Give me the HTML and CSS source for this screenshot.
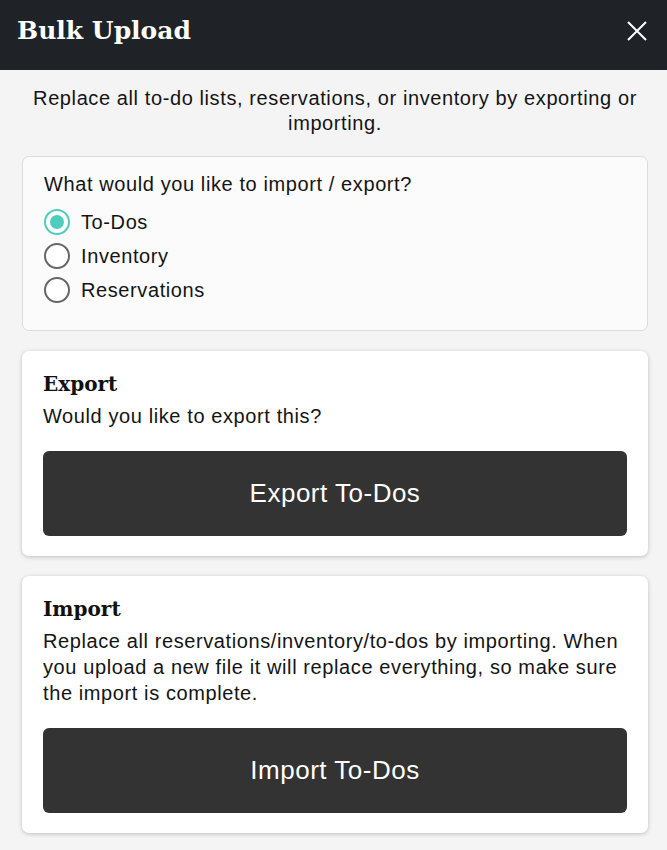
FILE: index.html
```html
<!DOCTYPE html>
<html lang="en">
<head>
<meta charset="utf-8">
<title>Bulk Upload</title>
<link rel="stylesheet" href="styles.css">
</head>
<body>
<header class="topbar">
  <h1 class="title">Bulk Upload</h1>
  <button class="close" aria-label="Close">
    <svg width="20" height="20" viewBox="0 0 20 20"><path d="M1 1 L19 19 M19 1 L1 19" stroke="#fff" stroke-width="2" fill="none"/></svg>
  </button>
</header>
<main class="content">
  <p class="intro">Replace all to-do lists, reservations, or inventory by exporting or importing.</p>
  <section class="choice">
    <p class="question">What would you like to import / export?</p>
    <div class="options">
      <label class="option"><span class="radio checked"></span>To-Dos</label>
      <label class="option"><span class="radio"></span>Inventory</label>
      <label class="option"><span class="radio"></span>Reservations</label>
    </div>
  </section>
  <section class="card">
    <h2 class="card-title">Export</h2>
    <p class="card-text">Would you like to export this?</p>
    <button class="action">Export To-Dos</button>
  </section>
  <section class="card">
    <h2 class="card-title">Import</h2>
    <p class="card-text">Replace all reservations/inventory/to-dos by importing. When you upload a new file it will replace everything, so make sure the import is complete.</p>
    <button class="action">Import To-Dos</button>
  </section>
</main>
</body>
</html>
```
FILE: styles.css
```css
* { box-sizing: border-box; }
html, body { margin: 0; padding: 0; }
body {
  background: #f4f4f4;
  font-family: "Liberation Sans", Arial, sans-serif;
  color: #141414;
  font-size: 20px;
  letter-spacing: 0.6px;
}
.topbar {
  height: 70px;
  background: #1f2226;
  display: flex;
  align-items: center;
  justify-content: space-between;
  padding: 0 20px 0 17px;
}
.title {
  margin: 0;
  color: #fff;
  font-family: "DejaVu Serif", serif;
  font-weight: bold;
  font-size: 25px;
  line-height: 30px;
  letter-spacing: 0;
  position: relative;
  top: -4px;
}
.close {
  background: none;
  border: 0;
  padding: 0;
  width: 20px;
  height: 20px;
  display: flex;
  position: relative;
  top: -4px;
}
.content {
  padding: 16px 19px 16px 22px;
  display: flex;
  flex-direction: column;
  gap: 20px;
}
.intro {
  margin: 0;
  text-align: center;
  line-height: 25px;
  padding: 0 4px;
}
.choice {
  margin-top: 0;
  background: #fbfbfb;
  border: 1px solid #dcdcdc;
  border-radius: 7px;
  padding: 15px 21px 23px;
}
.question {
  margin: 0;
  line-height: 24px;
}
.options {
  margin-top: 9px;
  display: flex;
  flex-direction: column;
}
.option {
  height: 34px;
  display: flex;
  align-items: center;
  gap: 11px;
}
.radio {
  width: 26px;
  height: 26px;
  border-radius: 50%;
  border: 2px solid #666;
  background: #fff;
  display: flex;
  align-items: center;
  justify-content: center;
}
.radio.checked {
  border-color: #4ecdbd;
}
.radio.checked::after {
  content: "";
  width: 14px;
  height: 14px;
  border-radius: 50%;
  background: #4ecdbd;
}
.card {
  background: #fff;
  border-radius: 7px;
  box-shadow: 0 1px 4px rgba(0, 0, 0, 0.22);
  padding: 20px 21px 20px;
}
.card-title {
  margin: 0;
  font-family: "DejaVu Serif", serif;
  font-weight: bold;
  font-size: 20px;
  line-height: 26px;
  letter-spacing: 0;
  color: #111;
}
.card-text {
  margin: 6px 0 0;
  line-height: 26px;
}
.action {
  margin-top: 22px;
  width: 100%;
  height: 85px;
  border: 0;
  border-radius: 6px;
  background: #333333;
  color: #fff;
  font-family: "Liberation Sans", Arial, sans-serif;
  font-size: 26px;
  letter-spacing: 0.5px;
  display: block;
}
```
